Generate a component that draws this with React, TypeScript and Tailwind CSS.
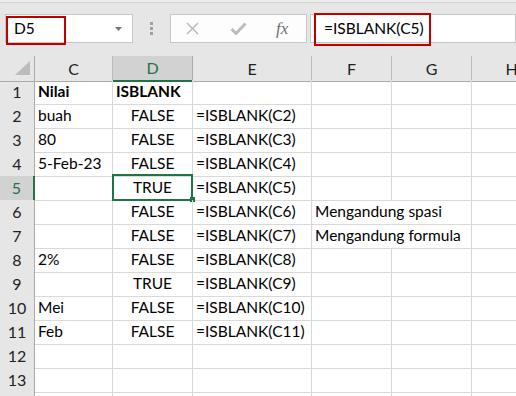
const font = { fontFamily: "Lato, 'Liberation Sans', sans-serif" };

type Row = { c?: string; d?: string; e?: string; f?: string; bold?: boolean };

const rows: Row[] = [
  { c: "Nilai", d: "ISBLANK", bold: true },
  { c: "buah", d: "FALSE", e: "=ISBLANK(C2)" },
  { c: "80", d: "FALSE", e: "=ISBLANK(C3)" },
  { c: "5-Feb-23", d: "FALSE", e: "=ISBLANK(C4)" },
  { c: "", d: "TRUE", e: "=ISBLANK(C5)" },
  { c: "", d: "FALSE", e: "=ISBLANK(C6)", f: "Mengandung spasi" },
  { c: "", d: "FALSE", e: "=ISBLANK(C7)", f: "Mengandung formula" },
  { c: "2%", d: "FALSE", e: "=ISBLANK(C8)" },
  { c: "", d: "TRUE", e: "=ISBLANK(C9)" },
  { c: "Mei", d: "FALSE", e: "=ISBLANK(C10)" },
  { c: "Feb", d: "FALSE", e: "=ISBLANK(C11)" },
  {},
  {},
];

const cols = ["C", "D", "E", "F", "G", "H"];
const grid = "grid grid-cols-[35px_78px_80px_119px_80px_80px_80px]";

function FormulaBar() {
  return (
    <div className="relative h-[56px] bg-[#e6e6e6]">
      <div className="h-[3px] border-b border-[#d4d4d4] bg-[#ebebeb]" />
      <div className="flex items-start pt-[11px]">
        {/* Name box */}
        <div className="ml-[5px] flex h-[29px] w-[128px] items-center justify-between border border-[#c6c6c6] bg-white pl-[8px] pr-[10px]">
          <span className="text-[15.5px] text-black">D5</span>
          <svg width="7" height="4" viewBox="0 0 7 4">
            <path d="M0 0h7L3.5 4z" fill="#777" />
          </svg>
        </div>

        {/* Dots */}
        <div className="ml-[17px] mt-[8px] flex w-[4px] flex-col gap-[2px]">
          <span className="h-[3px] w-[3px] bg-[#a0a0a0]" />
          <span className="h-[3px] w-[3px] bg-[#a0a0a0]" />
          <span className="h-[3px] w-[3px] bg-[#a0a0a0]" />
        </div>

        {/* Cancel / Enter / fx */}
        <div className="ml-[16px] flex h-[29px] w-[137px] items-center border border-[#c6c6c6] bg-[#fdfdfd]">
          <svg className="ml-[15px]" width="13" height="13" viewBox="0 0 13 13">
            <path d="M1 1l11 11M12 1L1 12" stroke="#b5b5b5" strokeWidth="1.4" />
          </svg>
          <svg className="ml-[31px]" width="17" height="13" viewBox="0 0 17 13">
            <path d="M1.5 7l4.5 4.5L15.5 1.5" stroke="#bdbdbd" strokeWidth="3" fill="none" />
          </svg>
          <span
            className="ml-[29px] text-[17px] italic text-[#6f6f6f]"
            style={{ fontFamily: "'Liberation Serif', serif" }}
          >
            fx
          </span>
        </div>

        {/* Formula input */}
        <div className="ml-[3px] flex h-[29px] flex-1 items-center border border-[#c6c6c6] bg-white pl-[13px]">
          <span className="text-[15.5px] text-black">=ISBLANK(C5)</span>
        </div>
      </div>

      {/* Annotation outlines */}
      <div className="absolute left-[6px] top-[16px] h-[29px] w-[60px] border-2 border-[#c00000]" />
      <div className="absolute left-[314px] top-[13px] h-[33px] w-[117px] border-2 border-[#c00000]" />
    </div>
  );
}

function HeaderRow() {
  return (
    <div className={`${grid} h-[24px]`}>
      <div className="relative border-r border-b border-[#ababab] bg-[#e6e6e6]">
        <svg className="absolute left-[15px] top-[5px]" width="15" height="14" viewBox="0 0 15 14">
          <path d="M15 0V14H0z" fill="#bcbcbc" />
        </svg>
      </div>
      {cols.map((c) =>
        c === "D" ? (
          <div
            key={c}
            className="flex items-center justify-center border-r border-b-2 border-r-[#ababab] border-b-[#217346] bg-[#d2d2d2] text-[16px] text-[#217346]"
          >
            {c}
          </div>
        ) : (
          <div
            key={c}
            className="flex items-center justify-center border-r border-b border-[#bcbcbc] border-b-[#ababab] bg-[#e6e6e6] text-[16px] text-[#222]"
          >
            {c}
          </div>
        )
      )}
    </div>
  );
}

function DataRow({ row, n }: { row: Row; n: number }) {
  const selected = n === 5;
  const cell = "flex items-center border-r border-b border-[#d9d9d9] px-[3px] whitespace-nowrap text-[15.5px] text-black";
  return (
    <div className={`${grid} h-[24px]`}>
      <div
        className={
          selected
            ? "flex items-center justify-center border-r-2 border-b border-r-[#217346] border-b-[#c8c8c8] bg-[#d2d2d2] text-[16px] text-[#217346]"
            : "flex items-center justify-center border-r border-b border-r-[#ababab] border-b-[#c8c8c8] bg-[#e6e6e6] text-[16px] text-[#222]"
        }
      >
        {n}
      </div>
      <div className={`${cell} ${row.bold ? "font-bold" : ""}`}>{row.c}</div>
      <div className={`${cell} relative ${row.bold ? "font-bold" : "justify-center"}`}>
        {row.d}
        {selected && (
          <>
            <div className="absolute -left-[1px] -top-[2px] -right-[1px] -bottom-[1px] border-2 border-[#217346]" />
            <div className="absolute -right-[3px] -bottom-[2px] h-[5px] w-[5px] bg-[#217346]" />
          </>
        )}
      </div>
      <div className={cell}>{row.e}</div>
      <div className={`${cell} overflow-visible ${row.f ? "border-r-transparent" : ""}`}>
        {row.f}
      </div>
      <div className={cell} />
      <div className={cell} />
    </div>
  );
}

export default function App() {
  return (
    <div className="h-[396px] w-[516px] overflow-hidden bg-white" style={font}>
      <FormulaBar />
      <HeaderRow />
      {rows.map((r, i) => (
        <DataRow key={i} row={r} n={i + 1} />
      ))}
      {/* partly visible row 14 */}
      <div className={`${grid} h-[24px]`}>
        <div className="border-r border-[#ababab] bg-[#e6e6e6]" />
        <div className="border-r border-[#d9d9d9]" />
        <div className="border-r border-[#d9d9d9]" />
        <div className="border-r border-[#d9d9d9]" />
        <div className="border-r border-[#d9d9d9]" />
        <div className="border-r border-[#d9d9d9]" />
        <div className="border-r border-[#d9d9d9]" />
      </div>
    </div>
  );
}
